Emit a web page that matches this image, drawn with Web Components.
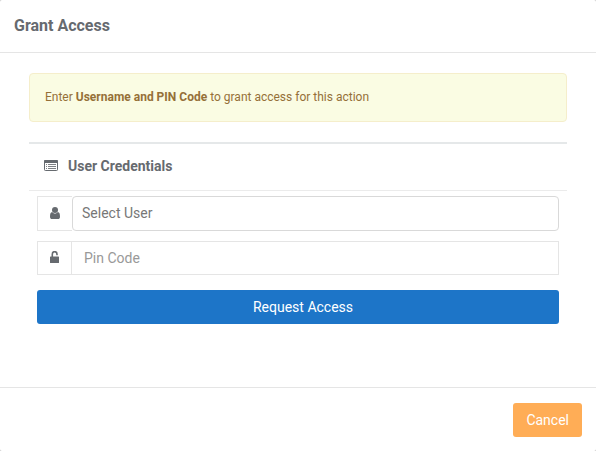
<!DOCTYPE html>
<html lang="en">
<head>
<meta charset="utf-8">
<title>Grant Access</title>
<style>
    html, body {
        margin: 0;
        height: 100%;
        background: #c8c8c8;
    }

    body {
        font-family: Roboto, "Liberation Sans", sans-serif;
        font-size: 14px;
        color: #666a6f;
        overflow: hidden;
    }
</style>
</head>
<body>
<access-modal>
    <span slot="title">Grant Access</span>
    <alert-note>Enter <b>Username and PIN Code</b> to grant access for this action</alert-note>
    <form-panel>
        <ui-icon slot="icon" name="list"></ui-icon>
        <span slot="title">User Credentials</span>
        <input-group kind="select">
            <ui-icon slot="addon" name="user"></ui-icon>
            Select User
        </input-group>
        <input-group kind="text">
            <ui-icon slot="addon" name="unlock"></ui-icon>
            Pin Code
        </input-group>
        <ui-button variant="primary" block>Request Access</ui-button>
    </form-panel>
    <ui-button slot="footer" variant="warning">Cancel</ui-button>
</access-modal>

<script>
const ICONS = {
    list: `<svg width="14" height="11" viewBox="0 0 14 11">
        <rect x=".5" y=".5" width="13" height="10" rx=".8" fill="none" stroke="currentColor"/>
        <path fill="currentColor" d="M.5 0h13l.5.5V3H0V.5z"/>
        <path fill="currentColor" opacity=".85" d="M2 4h1v1H2zM4 4h8v1H4zM2 6h1v1H2zM4 6h8v1H4zM2 8h1v1H2zM4 8h8v1H4z"/>
    </svg>`,
    user: `<svg width="10" height="12" viewBox="0 0 10 12">
        <circle cx="5" cy="3" r="3" fill="currentColor"/>
        <path fill="currentColor" d="M2.1 5.1C.6 5.3 0 7 0 9.7 0 11.1.8 12 2 12h6c1.2 0 2-.9 2-2.300 0-2.700-.6-4.400-2.100-4.600C7.200 6 6.200 6.600 5 6.600S2.800 6 2.100 5.100z"/>
    </svg>`,
    unlock: `<svg width="10" height="12" viewBox="0 0 10 12">
        <path fill="none" stroke="currentColor" stroke-width="1.6" d="M2.300 6.500V3.300a2.200 2.500 0 0 1 4.700 0v.9"/>
        <rect y="5.500" width="9" height="6.500" rx=".6" fill="currentColor"/>
    </svg>`
};

class UiIcon extends HTMLElement {
    constructor() {
        super();
        this.attachShadow({ mode: "open" });
    }

    connectedCallback() {
        this.shadowRoot.innerHTML = `
            <style>
                :host { display: inline-flex; }
                svg { display: block; }
            </style>
            ${ICONS[this.getAttribute("name")] || ""}
        `;
    }
}

class UiButton extends HTMLElement {
    constructor() {
        super();
        this.attachShadow({ mode: "open" });
        this.shadowRoot.innerHTML = `
            <style>
                :host {
                    --button-color: #1d75c8;
                    display: inline-flex;
                }

                :host([block]) { display: flex; }
                :host([block]) button { padding-left: 23px; }
                :host([variant="warning"]) { --button-color: #ffad56; }

                button {
                    flex: 1;
                    box-sizing: border-box;
                    height: 34px;
                    padding: 0 13px;
                    border: 0;
                    border-radius: 3px;
                    background: var(--button-color);
                    color: #fff;
                    font: inherit;
                    cursor: pointer;
                }
            </style>
            <button type="button"><slot></slot></button>
        `;
    }
}

class AlertNote extends HTMLElement {
    constructor() {
        super();
        this.attachShadow({ mode: "open" });
        this.shadowRoot.innerHTML = `
            <style>
                :host {
                    display: block;
                    box-sizing: border-box;
                    height: 49px;
                    padding: 15px;
                    border: 1px solid #f5eecb;
                    border-radius: 4px;
                    background: #fafce3;
                    color: #957038;
                    font-size: 12px;
                    line-height: 17px;
                }
            </style>
            <slot></slot>
        `;
    }
}

class InputGroup extends HTMLElement {
    constructor() {
        super();
        this.attachShadow({ mode: "open" });
        this.shadowRoot.innerHTML = `
            <style>
                :host {
                    display: flex;
                    height: 34px;
                    color: #999;
                }

                .addon {
                    display: flex;
                    align-items: center;
                    justify-content: center;
                    box-sizing: border-box;
                    width: 35px;
                    padding-bottom: 2px;
                    border: 1px solid #e5e5e5;
                    border-right: 0;
                    color: #666a6f;
                }

                .field {
                    flex: 1;
                    display: flex;
                    align-items: center;
                    box-sizing: border-box;
                    padding-left: 12px;
                    margin-left: -1px;
                    border: 1px solid #e5e5e5;
                }

                /* the select is rounded and sits beside its addon */
                :host([kind="select"]) {
                    height: 35px;
                    color: #777;
                }

                :host([kind="select"]) .field {
                    padding: 0 0 2px 9px;
                    margin-left: 0;
                    border-color: #d9d9d9;
                    border-radius: 4px;
                }
            </style>
            <div class="addon"><slot name="addon"></slot></div>
            <div class="field"><slot></slot></div>
        `;
    }
}

class FormPanel extends HTMLElement {
    constructor() {
        super();
        this.attachShadow({ mode: "open" });
        this.shadowRoot.innerHTML = `
            <style>
                :host {
                    display: block;
                    margin-top: 20px;
                    border-top: 2px solid #e5e8e9;
                }

                .caption {
                    display: flex;
                    align-items: center;
                    gap: 10px;
                    box-sizing: border-box;
                    height: 47px;
                    padding: 0 15px 3px;
                    border-bottom: 1px solid #ebebeb;
                    font-weight: bold;
                }

                .rows {
                    display: flex;
                    flex-direction: column;
                    gap: 10px;
                    padding: 5px 8px 0;
                }

                ::slotted(ui-button) { margin-top: 5px; }
            </style>
            <div class="caption"><slot name="icon"></slot><slot name="title"></slot></div>
            <div class="rows"><slot></slot></div>
        `;
    }
}

class AccessModal extends HTMLElement {
    constructor() {
        super();
        this.attachShadow({ mode: "open" });
        this.shadowRoot.innerHTML = `
            <style>
                :host {
                    display: flex;
                    flex-direction: column;
                    height: 100%;
                    border-radius: 2px;
                    background: #fff;
                }

                header {
                    box-sizing: border-box;
                    height: 53px;
                    padding: 15px 14px;
                    border-bottom: 1px solid #e5e5e5;
                    font-size: 16px;
                    line-height: 21px;
                    font-weight: bold;
                }

                main {
                    flex: 1;
                    padding: 20px 29px 0;
                }

                footer {
                    display: flex;
                    justify-content: flex-end;
                    box-sizing: border-box;
                    height: 64px;
                    padding: 15px 14px;
                    border-top: 1px solid #e5e5e5;
                }
            </style>
            <header><slot name="title"></slot></header>
            <main><slot></slot></main>
            <footer><slot name="footer"></slot></footer>
        `;
    }
}

customElements.define("ui-icon", UiIcon);
customElements.define("ui-button", UiButton);
customElements.define("alert-note", AlertNote);
customElements.define("input-group", InputGroup);
customElements.define("form-panel", FormPanel);
customElements.define("access-modal", AccessModal);
</script>
</body>
</html>
